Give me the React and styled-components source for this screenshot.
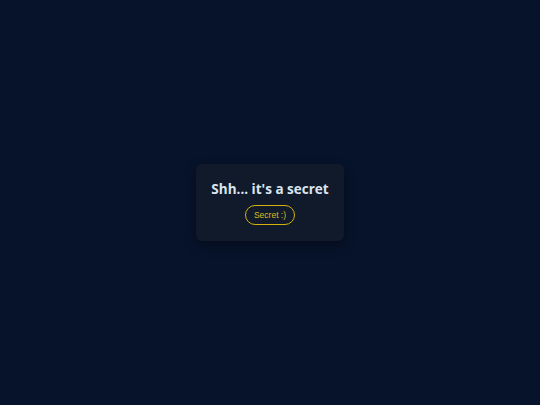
import React from "react";
import styled, { createGlobalStyle } from "styled-components";

const GlobalStyle = createGlobalStyle`
  html, body {
    margin: 0;
    padding: 0;
    background: #08142a;
  }
`;

const Page = styled.div`
  width: 540px;
  height: 405px;
  display: flex;
  align-items: center;
  justify-content: center;
  background: #07132a;
`;

const Card = styled.div`
  box-sizing: border-box;
  width: 148px;
  height: 77px;
  display: flex;
  flex-direction: column;
  align-items: center;
  padding-top: 16px;
  gap: 7px;
  background: #101a2a;
  border-radius: 6px;
  box-shadow: 0 4px 12px rgba(0, 0, 0, 0.35);
`;

const Title = styled.h1`
  margin: 0;
  font-family: "Open Sans", sans-serif;
  font-size: 13.5px;
  font-weight: 700;
  color: #dbe4ef;
  line-height: 18px;
`;

const Button = styled.button`
  height: 20px;
  padding: 0 8px;
  border: 1.5px solid #d6b10a;
  border-radius: 10px;
  background: transparent;
  color: #ddbd1e;
  font-family: "Liberation Sans", Arial, sans-serif;
  font-size: 8.5px;
  cursor: pointer;
`;

export default function App() {
  return (
    <>
      <GlobalStyle />
      <Page>
        <Card>
          <Title>Shh... it's a secret</Title>
          <Button>Secret :)</Button>
        </Card>
      </Page>
    </>
  );
}
